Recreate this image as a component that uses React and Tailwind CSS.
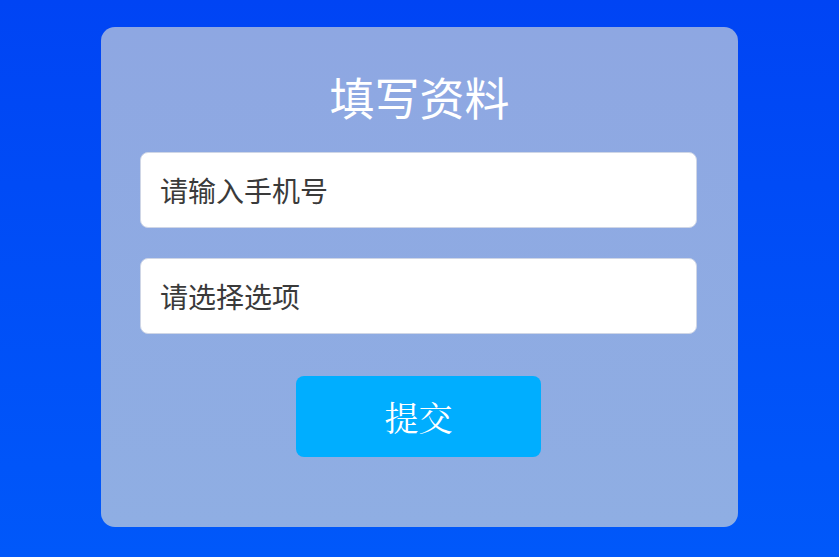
import React from "react";

const App = () => {
  return (
    <div
      className="min-h-[557px] w-full bg-gradient-to-b from-[#0044f4] to-[#0058fa] pt-[27px]"
      style={{ fontFamily: '"Noto Sans CJK SC", "Noto Sans", sans-serif' }}
    >
      <div className="ml-[101px] w-[637px] rounded-[14px] bg-gradient-to-b from-[#8ea7e2] to-[#8faee3] px-[39px] pt-[47px] pb-[70px]">
        <div className="text-center text-[45px] leading-none text-white">填写资料</div>

        <form className="mt-[33px] flex flex-col">
          <input
            type="text"
            placeholder="请输入手机号"
            className="h-[76px] w-[557px] rounded-[8px] border border-[#cfd6e6] bg-white px-[19px] text-[28px] text-[#333] outline-none placeholder:text-[#3a3a3a]"
          />

          <div className="mt-[30px] flex h-[76px] w-[557px] items-center rounded-[8px] border border-[#cfd6e6] bg-white px-[19px] text-[28px] text-[#3a3a3a]">
            请选择选项
          </div>

          <div className="mt-[42px] flex w-[557px] justify-center">
            <button
              type="button"
              className="h-[81px] w-[245px] rounded-[8px] bg-[#00aeff] text-[34px] text-white"
              style={{ fontFamily: '"Noto Serif CJK SC", serif' }}
            >
              提交
            </button>
          </div>
        </form>
      </div>
    </div>
  );
};

export default App;
